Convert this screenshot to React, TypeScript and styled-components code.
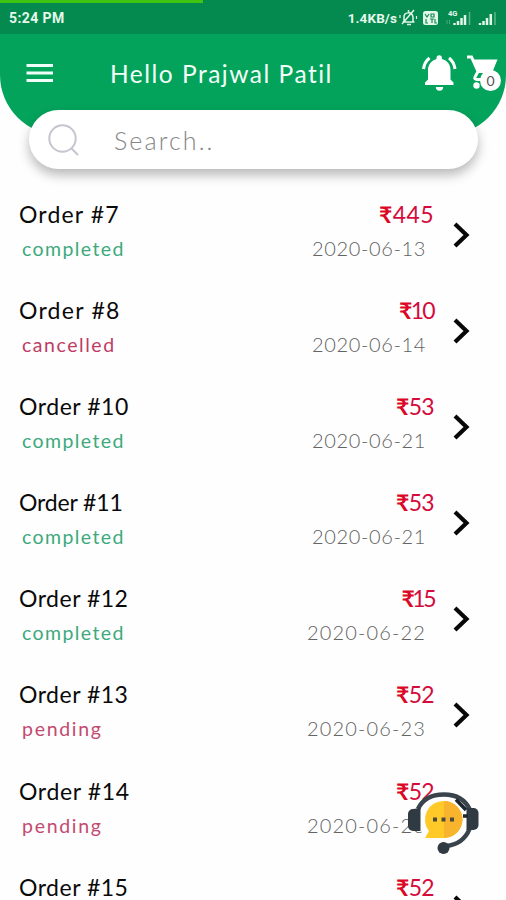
import React from "react";
import styled, { createGlobalStyle } from "styled-components";

const GlobalStyle = createGlobalStyle`
  *, *::before, *::after { box-sizing: border-box; }
  body { margin: 0; background: #fefefe; }
`;

const Screen = styled.div`
  position: relative;
  width: 506px;
  height: 900px;
  overflow: hidden;
  background: #fefefe;
  font-family: Lato, "Noto Sans", sans-serif;
  white-space: nowrap;
`;

const Header = styled.header`
  height: 135px;
  background: #04a35c;
  border-radius: 0 0 60px 60px;
`;

const ProgressLine = styled.div`
  width: 203px;
  height: 3px;
  background: #3fc411;
`;

const StatusBar = styled.div`
  height: 34px;
  background: #048a4e;
`;

const StatusContent = styled.div`
  display: flex;
  align-items: center;
  justify-content: space-between;
  height: 30px;
  padding: 0 8px 0 9px;
  color: #e6f8ec;
  font: 700 14px/30px Roboto, sans-serif;
`;

const Clock = styled.span`
  letter-spacing: 0.4px;
`;

const StatusRight = styled.div`
  display: flex;
  align-items: center;
`;

const NetSpeed = styled.span`
  font-size: 13.5px;
  letter-spacing: 0.1px;
  margin-right: 2px;
`;

const TitleBar = styled.div`
  display: flex;
  align-items: center;
  height: 78px;
  padding-left: 26px;
`;

const Title = styled.h1`
  flex: 1;
  margin: 2px 0 0 56px;
  color: #f3fff8;
  font-size: 24.5px;
  font-weight: 400;
  line-height: 30px;
  letter-spacing: 1.5px;
`;

const CartButton = styled.div`
  position: relative;
  width: 36px;
  height: 40px;
  margin-left: 9px;
  margin-right: 3px;
`;

const CartBadge = styled.span`
  position: absolute;
  left: 13px;
  top: 17px;
  width: 21px;
  height: 21px;
  border-radius: 50%;
  background: #fff;
  color: #555;
  font-size: 14px;
  line-height: 21px;
  text-align: center;
`;

const SearchBar = styled.div`
  position: relative;
  display: flex;
  align-items: center;
  width: 449px;
  height: 59px;
  margin: -25px 0 0 29px;
  padding-left: 19px;
  border-radius: 30px;
  background: #fff;
  box-shadow: 0 6px 12px rgba(0, 0, 0, 0.28);
`;

const SearchHint = styled.span`
  margin-left: 34px;
  color: #858585;
  font-size: 25px;
  font-weight: 300;
  letter-spacing: 2.1px;
`;

const OrderList = styled.main`
  padding-top: 28px;
`;

const OrderRow = styled.article`
  display: flex;
  height: 96.1px;
  padding-left: 19px;
`;

const OrderInfo = styled.div`
  flex: 1;
`;

const OrderName = styled.div<{ $track: number }>`
  height: 34px;
  color: #0a0a0a;
  font-size: 23px;
  line-height: 35px;
  letter-spacing: ${(p) => p.$track}px;
`;

const tones = { completed: "#3da97c", cancelled: "#c03c65", pending: "#c34a70" };
type Status = keyof typeof tones;

const StatusText = styled.div<{ $status: Status; $track: number }>`
  padding-left: 3px;
  color: ${(p) => tones[p.$status]};
  font-size: 19.5px;
  line-height: 36px;
  letter-spacing: ${(p) => p.$track}px;
`;

const Amounts = styled.div`
  width: 140px;
  text-align: right;
`;

const Price = styled.div<{ $track: number }>`
  height: 34px;
  color: #d40b3c;
  font-size: 23px;
  line-height: 34px;
  letter-spacing: ${(p) => p.$track}px;
`;

const Rupee = styled.span`
  color: #dc0725;
  font-weight: 700;
`;

const OrderDate = styled.div<{ $track: number }>`
  padding-right: 8px;
  color: #636363;
  font-size: 20px;
  font-weight: 300;
  line-height: 34px;
  letter-spacing: ${(p) => p.$track}px;
`;

const Arrow = styled.svg`
  width: 20px;
  height: 30px;
  margin: 23px 34px 0 18px;
`;

const SupportButton = styled.div`
  position: absolute;
  left: 407px;
  top: 791px;
  width: 73px;
  height: 64px;
`;

type Order = {
  id: number;
  status: Status;
  price: number;
  date: string;
  nameTrack: number;
  priceTrack: number;
  dateTrack: number;
};

const orders: Order[] = [
  { id: 7, status: "completed", price: 445, date: "2020-06-13", nameTrack: 1.15, priceTrack: 0.4, dateTrack: 0.65 },
  { id: 8, status: "cancelled", price: 10, date: "2020-06-14", nameTrack: 1.25, priceTrack: -1.7, dateTrack: 0.65 },
  { id: 10, status: "completed", price: 53, date: "2020-06-21", nameTrack: 0.55, priceTrack: -0.7, dateTrack: 0.65 },
  { id: 11, status: "completed", price: 53, date: "2020-06-21", nameTrack: -0.15, priceTrack: -0.7, dateTrack: 0.65 },
  { id: 12, status: "completed", price: 15, date: "2020-06-22", nameTrack: 0.5, priceTrack: -2.5, dateTrack: 1.15 },
  { id: 13, status: "pending", price: 52, date: "2020-06-23", nameTrack: 0.5, priceTrack: -0.7, dateTrack: 1.15 },
  { id: 14, status: "pending", price: 52, date: "2020-06-23", nameTrack: 0.65, priceTrack: -0.7, dateTrack: 1.15 },
  { id: 15, status: "pending", price: 52, date: "2020-06-24", nameTrack: 0.5, priceTrack: -0.7, dateTrack: 1.15 },
];

const statusTrack: Record<Status, number> = { completed: 1.4, cancelled: 1.55, pending: 1.7 };

const StatusIcons = () => (
  <svg width="99" height="20" viewBox="0 0 99 20" fill="none" stroke="#e2f6e9">
    <path d="M3.5 14h12M5 14V9c0-5 8-6 9 0v5M8 16.5h4M3 16 15 2M9.5 4V2" strokeWidth="1.5" />
    <path d="M1 10V7M17.5 11V8" strokeWidth="1.2" />
    <rect x="24" y="3" width="15" height="14" rx="2.5" fill="#e2f6e9" stroke="none" />
    <path d="M26 6l2 3 2-3M32 6h3v3h-3zM27 11v4h2M31 11h4M33 11v4M36 11v4h2" stroke="#178b52" strokeWidth="1.2" />
    <text x="49" y="8" fill="#e2f6e9" stroke="none" fontSize="7.5" fontWeight="700" fontFamily="Roboto">4G</text>
    <path d="M55.5 17v-2M59 17v-4M62.5 17V10M66 17V7" strokeWidth="2.5" />
    <path d="M70.5 17V4M96 17V4" strokeWidth="1.5" opacity=".4" />
    <path d="M48 12v4M50.5 12v4" opacity=".3" />
    <path d="M81 17v-2M84.5 17v-4M88 17V10M91.8 17V6" strokeWidth="2.5" />
  </svg>
);

const MenuIcon = () => (
  <svg width="28" height="20" viewBox="0 0 28 20" fill="#f0fff7">
    <path d="M.5 1h26.500v3H.5zM.5 8.500h26.500v3H.5zM.5 16h26.500v3H.5z" />
  </svg>
);

const BellIcon = () => (
  <svg width="37" height="38" viewBox="0 0 37 38" fill="#fff">
    <path d="M15.500 5V4a2.700 2.700 0 0 1 5.400 0v1C26.500 6.500 29.500 10.500 29.500 16v9.500l3 3V31H4v-2.500l3-3V16c0-5.500 3.500-9.500 8.500-11ZM14.800 33h7.400a3.700 3.700 0 0 1-7.400 0Z" />
    <path d="M2.500 15C3 10.500 5 6.800 8.500 4M34 15C33.500 10.500 31.500 6.800 28 4" fill="none" stroke="#fff" strokeWidth="3" />
  </svg>
);

const CartIcon = () => (
  <svg width="36" height="40" viewBox="0 0 36 40" fill="none" stroke="#fff">
    <path d="M0 4h4.500L11 18.500 8 24c-.6 1.800 0 2.500 2 2.500h12" strokeWidth="3" />
    <path d="M5 6.500h25.500L25 20H11.500Z" fill="#fff" stroke="none" />
    <circle cx="9.500" cy="32.500" r="3.200" fill="#fff" stroke="none" />
  </svg>
);

const SearchIcon = () => (
  <svg width="32" height="34" viewBox="0 0 32 34" fill="none" stroke="#c5c5cf">
    <circle cx="14.500" cy="15.500" r="13.200" strokeWidth="2" />
    <path d="m23.500 25.500 6.500 6.500" strokeWidth="2" />
  </svg>
);

const SupportIcon = () => (
  <svg width="73" height="64" viewBox="0 0 73 64">
    <circle cx="37" cy="29" r="25.500" fill="#fefefe" />
    <path d="M11 18C16 7 25 3.500 37 3.500s21 4.500 26 15.500" fill="none" stroke="#39434c" strokeWidth="4.500" />
    <path d="M62.500 38C58 49 49 54 39 55" fill="none" stroke="#39434c" strokeWidth="4.500" />
    <path d="M13.500 17v23H6a5 5 0 0 1-5-5V23a5 5 0 0 1 5-5Z" fill="#303a43" />
    <path d="M59.500 17h7a5 5 0 0 1 5 5v12a5 5 0 0 1-5 5h-7Z" fill="#303a43" />
    <path d="M49 8.500 59 19M56 25h5" fill="none" stroke="#1d272f" strokeWidth="3.500" />
    <circle cx="36.500" cy="57" r="6" fill="#303a43" />
    <path d="M37 10a18.500 18.500 0 1 1 0 37H18l4-7A18.500 18.500 0 0 1 37 10Z" fill="#ffc928" />
    <path d="M37 10a18.500 18.500 0 0 1 0 37Z" fill="#f7b42c" />
    <path d="M26 26.500h4v4h-4zM34.500 26.500h4v4h-4zM43 26.500h4v4h-4z" fill="#4a4a3c" />
  </svg>
);

export default function App() {
  return (
    <Screen>
      <GlobalStyle />
      <Header>
        <StatusBar>
          <ProgressLine />
          <StatusContent>
            <Clock>5:24 PM</Clock>
            <StatusRight>
              <NetSpeed>1.4KB/s</NetSpeed>
              <StatusIcons />
            </StatusRight>
          </StatusContent>
        </StatusBar>
        <TitleBar>
          <MenuIcon />
          <Title>Hello Prajwal Patil</Title>
          <BellIcon />
          <CartButton>
            <CartIcon />
            <CartBadge>0</CartBadge>
          </CartButton>
        </TitleBar>
      </Header>
      <SearchBar>
        <SearchIcon />
        <SearchHint>Search..</SearchHint>
      </SearchBar>
      <OrderList>
        {orders.map((o) => (
          <OrderRow key={o.id}>
            <OrderInfo>
              <OrderName $track={o.nameTrack}>Order #{o.id}</OrderName>
              {o.id !== 15 && (
                <StatusText $status={o.status} $track={statusTrack[o.status]}>{o.status}</StatusText>
              )}
            </OrderInfo>
            <Amounts>
              <Price $track={o.priceTrack}><Rupee>₹</Rupee>{o.price}</Price>
              {o.id !== 15 && <OrderDate $track={o.dateTrack}>{o.date}</OrderDate>}
            </Amounts>
            <Arrow viewBox="0 0 20 30">
              <path d="m3 4 11.500 11L3 26" fill="none" stroke="#080808" strokeWidth="4.200" />
            </Arrow>
          </OrderRow>
        ))}
      </OrderList>
      <SupportButton>
        <SupportIcon />
      </SupportButton>
    </Screen>
  );
}
